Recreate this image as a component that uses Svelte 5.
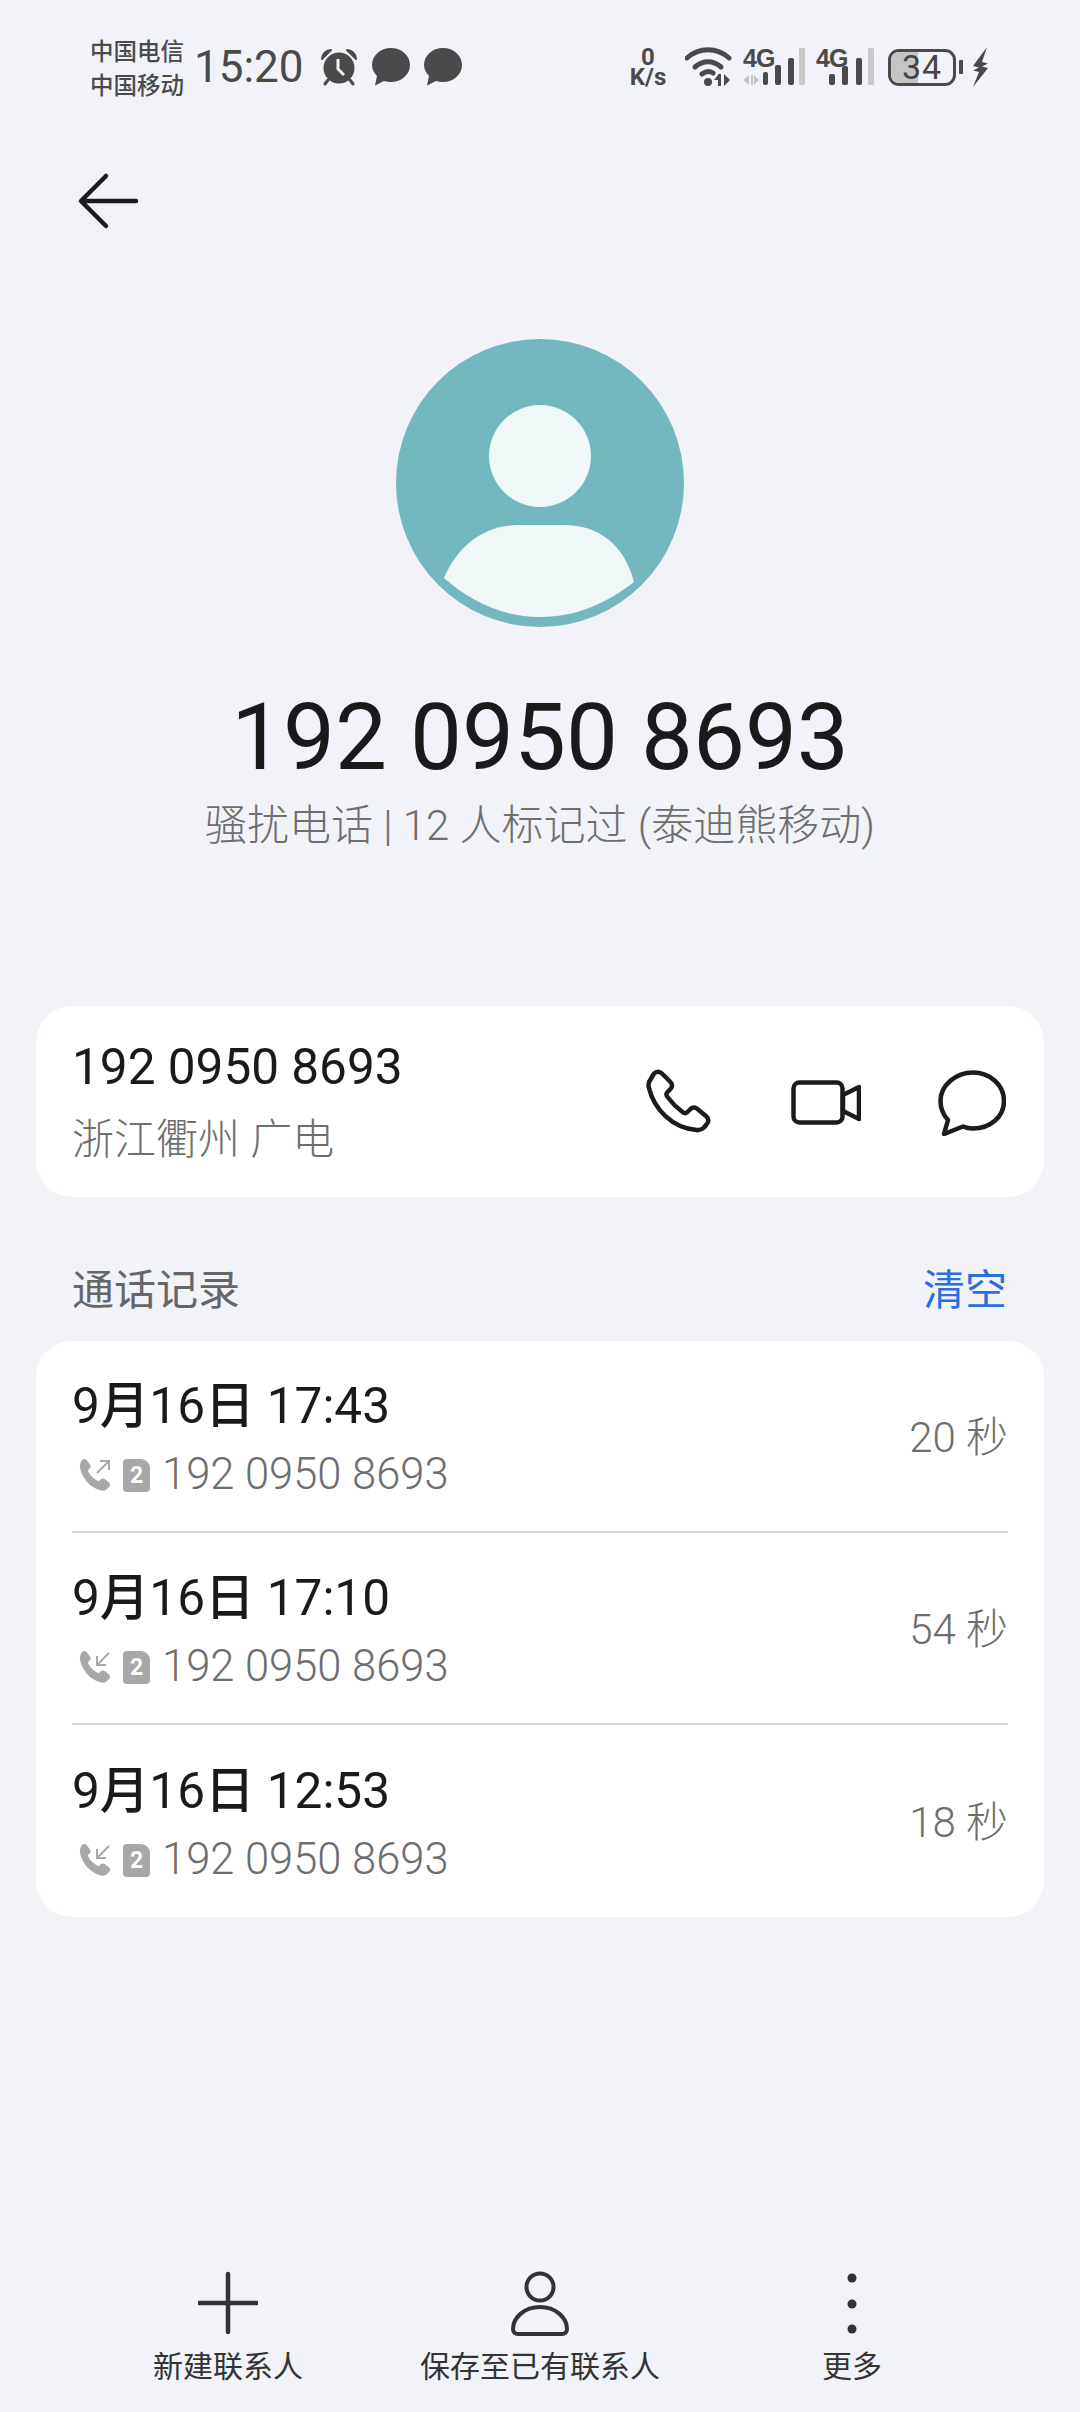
<script lang="ts">
  const calls = [
    { time: '9月16日 17:43', dur: '20 秒', out: true },
    { time: '9月16日 17:10', dur: '54 秒', out: false },
    { time: '9月16日 12:53', dur: '18 秒', out: false }
  ]
  const number = '192 0950 8693'
</script>

<div class="page">
  <div class="status">
    <div class="carrier"><span>中国电信</span><span>中国移动</span></div>
    <span class="clock">15:20</span>
    <svg class="alarm" width="38" height="38" viewBox="0 0 38 38">
      <circle cx="19" cy="20" r="15.5" fill="#4a4a4a" />
      <path d="M2 11C2 6 6 2 11 2L2 11zM36 11C36 6 32 2 27 2L36 11z" fill="#4a4a4a" stroke="#4a4a4a" stroke-width="2" stroke-linejoin="round" />
      <path d="M8 32l-3 4M30 32l3 4" stroke="#4a4a4a" stroke-width="3" stroke-linecap="round" />
      <path d="M18 11v10l6 6" stroke="#f1f3f8" stroke-width="3" fill="none" />
    </svg>
    <svg class="bubble" width="38" height="38" viewBox="0 0 38 38">
      <path d="M19 0c10.500 0 19 7.500 19 17s-8.500 17-19 17c-2.500 0-4.800-.4-7-1.100L3 37.500l2-9.500C2 24.900 0 21.200 0 17 0 7.500 8.500 0 19 0z" fill="#4a4a4a" />
    </svg>
    <svg class="bubble" width="38" height="38" viewBox="0 0 38 38">
      <path d="M19 0c10.500 0 19 7.500 19 17s-8.500 17-19 17c-2.500 0-4.800-.4-7-1.100L3 37.500l2-9.500C2 24.900 0 21.200 0 17 0 7.500 8.500 0 19 0z" fill="#4a4a4a" />
    </svg>

    <div class="status-right">
      <div class="speed"><span>0</span><span>K/s</span></div>
      <svg class="wifi" width="48" height="40" viewBox="0 0 48 40">
        <g fill="none" stroke="#4a4a4a" stroke-width="5" stroke-linecap="round">
          <path d="M2 11C14 0 32 0 44 11" />
          <path d="M10 20c8-7 18-7 26 0" />
          <path d="M17 27c4-3 8-3 11-1" />
        </g>
        <circle cx="23" cy="35" r="4" fill="#4a4a4a" />
        <path d="M33 27h3v12h-3zM33 33l-4 0 4-5zM39 27l6 6-6 6z" fill="#4a4a4a" />
      </svg>
      <div class="signal one">
        <span class="tag">4G</span>
        <svg width="62" height="39" viewBox="0 0 62 39">
          <path d="M0 32l6-5v10zM8 27h2v10H8zM11 27l5 5-5 5z" fill="#c4c4c4" />
          <rect x="20" y="24" width="5" height="13" rx="2" fill="#4a4a4a" />
          <rect x="32" y="17" width="6" height="20" rx="2" fill="#4a4a4a" />
          <rect x="45" y="10" width="6" height="27" rx="2" fill="#4a4a4a" />
          <rect x="56" y="0" width="6" height="37" rx="1" fill="#c8c8c8" />
        </svg>
      </div>
      <div class="signal two">
        <span class="tag">4G</span>
        <svg width="45" height="39" viewBox="0 0 45 39">
          <rect x="0" y="26" width="6" height="11" rx="2" fill="#4a4a4a" />
          <rect x="13" y="18" width="6" height="19" rx="2" fill="#4a4a4a" />
          <rect x="27" y="10" width="6" height="27" rx="2" fill="#4a4a4a" />
          <rect x="39" y="0" width="6" height="37" rx="1" fill="#c8c8c8" />
        </svg>
      </div>
      <div class="battery">
        <div class="fill"></div>
        <span>34</span>
      </div>
      <div class="nub"></div>
      <svg class="bolt" width="18" height="40" viewBox="0 0 18 40">
        <path d="M16 0L2 19l6 1.500-6 3 6 1.500L2 40 17 21l-6-1.500 6-3-6-1.500z" fill="#4a4a4a" />
      </svg>
    </div>
  </div>

  <div class="nav">
    <svg width="64" height="60" viewBox="0 0 64 60">
      <path d="M60 30H6M30 5L5 30l25 25" fill="none" stroke="#1c1c1c" stroke-width="4.500" stroke-linecap="round" stroke-linejoin="round" />
    </svg>
  </div>

  <div class="hero">
    <svg class="avatar" width="288" height="288" viewBox="0 0 288 288">
      <circle cx="144" cy="144" r="144" fill="#73b8bf" />
      <circle cx="144" cy="117" r="51" fill="#f0f8f8" />
      <path d="M48 239C62 205 90 186 122 186h46c34 0 60 19 70 57-26 20-56 35-94 35-38 0-70-16-96-39z" fill="#f0f8f8" />
    </svg>
    <h1>{number}</h1>
    <p class="tagline">骚扰电话 | 12 人标记过 (泰迪熊移动)</p>
  </div>

  <section class="card contact">
    <div class="contact-text">
      <div class="num">{number}</div>
      <div class="loc">浙江衢州 广电</div>
    </div>
    <div class="actions">
      <svg class="a-phone" width="68" height="68" viewBox="0 0 68 68">
        <path d="M8 4.500c2.500-2.500 5.500-2.500 8 0l8 8c2.500 2.500 2.500 5.500 .5 7.500l-3 3c-1.500 1.500-1.500 3 0 5 4.500 6 9 10.500 15 15 2 1.500 3.500 1.500 5 0l3-3c2-2 5-2 7.500 .5l8 6.500c3 2.500 3 6 .5 8.500l-2.500 3c-2 2-4.500 3-7.500 2.500C26 59 8 40 3 19c-1-3-.5-6 1.500-8.500z" fill="none" stroke="#1c1c1c" stroke-width="4.500" stroke-linejoin="round" />
      </svg>
      <svg class="a-video" width="70" height="46" viewBox="0 0 70 46">
        <rect x="2.500" y="2.500" width="49" height="40" rx="6" fill="none" stroke="#1c1c1c" stroke-width="4.500" />
        <path d="M52 15l16-8v32l-16-8z" fill="none" stroke="#1c1c1c" stroke-width="4.500" stroke-linejoin="round" />
      </svg>
      <svg class="a-msg" width="68" height="66" viewBox="0 0 68 66">
        <path d="M35 2.500c17 0 31 12.500 31 28.500S52 58.500 35 58.500c-4 0-7-.6-10-2L6 64l4-14C5 44.500 2.500 38 2.500 31 2.500 15 18 2.500 35 2.500z" fill="none" stroke="#1c1c1c" stroke-width="4.500" stroke-linejoin="round" />
      </svg>
    </div>
  </section>

  <div class="section-head">
    <span>通话记录</span>
    <span class="clear">清空</span>
  </div>

  <section class="card log">
    {#each calls as c (c.time)}
      <div class="row">
        <div class="row-text">
          <div class="time">{c.time}</div>
          <div class="sub">
            <svg width="34" height="34" viewBox="0 0 34 34">
              <path d="M3 2c1.500-1.500 3.500-1.500 4.500 0l3.500 4.500c1 1.500 .8 2.800-.2 3.800l-2 2c1.500 4.500 6 9 11 11l2-2c1-1 2.500-1.200 3.800-.2l4.500 3.500c1.500 1.200 1.500 3 0 4.500l-2 2C26 33 23 33 20 32 11 28.500 4.500 22 1.500 12 .5 9 .5 5.500 3 2z" fill="#a8a8a8" />
              {#if c.out}
                <path d="M18 15L30 3M21 3h9v9" fill="none" stroke="#a8a8a8" stroke-width="2" />
              {:else}
                <path d="M30 3L18 15M18 6v9h9" fill="none" stroke="#a8a8a8" stroke-width="2" />
              {/if}
            </svg>
            <div class="sim"><span>2</span></div>
            <span class="sub-num">{number}</span>
          </div>
        </div>
        <span class="dur">{c.dur}</span>
      </div>
    {/each}
  </section>

  <nav class="bottom">
    <div class="tool">
      <svg width="60" height="60" viewBox="0 0 60 60">
        <path d="M30 1v58M1 30h58" stroke="#333" stroke-width="4.500" stroke-linecap="round" />
      </svg>
      <span>新建联系人</span>
    </div>
    <div class="tool">
      <svg width="60" height="66" viewBox="0 0 60 66">
        <circle cx="30" cy="17" r="13.500" fill="none" stroke="#333" stroke-width="4" />
        <path d="M30 37c16 0 27 11 27 22 0 3-2 5-5 5H8c-3 0-5-2-5-5 0-11 11-22 27-22z" fill="none" stroke="#333" stroke-width="4" />
      </svg>
      <span>保存至已有联系人</span>
    </div>
    <div class="tool">
      <svg width="12" height="66" viewBox="0 0 12 66">
        <circle cx="6" cy="8" r="4.500" fill="#333" />
        <circle cx="6" cy="34" r="4.500" fill="#333" />
        <circle cx="6" cy="59" r="4.500" fill="#333" />
      </svg>
      <span>更多</span>
    </div>
  </nav>
</div>

<style>
  :global(body) {
    margin: 0;
    background: #f1f3f8;
  }
  .page {
    width: 1080px;
    height: 2412px;
    position: relative;
    overflow: hidden;
    background: #f1f3f8;
    font-family: Roboto, 'Noto Sans CJK SC', sans-serif;
    color: #1a1a1a;
  }
  .status {
    display: flex;
    align-items: center;
    height: 38px;
    padding: 48px 91px 0 90px;
    color: #4a4a4a;
  }
  .carrier {
    display: flex;
    flex-direction: column;
    font-size: 23.5px;
    line-height: 34px;
    font-weight: 500;
    width: 104px;
    margin-top: 4px;
  }
  .clock {
    font-size: 44px;
    font-weight: 450;
    line-height: 38px;
    width: 126px;
  }
  .bubble {
    margin-left: 14px;
  }
  .status-right {
    margin-left: auto;
    display: flex;
    align-items: center;
  }
  .speed {
    display: flex;
    flex-direction: column;
    align-items: center;
    font-size: 24px;
    line-height: 20px;
    font-weight: 700;
    width: 40px;
  }
  .wifi {
    margin-left: 17px;
  }
  .signal {
    position: relative;
    height: 39px;
    display: flex;
    align-items: flex-end;
  }
  .signal.one {
    margin-left: 10px;
    width: 62px;
  }
  .signal.two {
    margin-left: 11px;
    width: 58px;
    justify-content: flex-end;
  }
  .tag {
    position: absolute;
    left: 0;
    top: -2px;
    font-size: 25px;
    line-height: 24px;
    font-weight: 700;
    letter-spacing: -1px;
    font-family: 'Liberation Sans', sans-serif;
  }
  .battery {
    margin-left: 14px;
    position: relative;
    width: 68px;
    height: 37px;
    box-sizing: border-box;
    border: 3.500px solid #4a4a4a;
    border-radius: 11px;
    overflow: hidden;
    display: flex;
    align-items: center;
    justify-content: center;
  }
  .fill {
    position: absolute;
    left: 0;
    top: 0;
    bottom: 0;
    width: 27px;
    background: #c5c5c5;
  }
  .battery span {
    position: relative;
    font-size: 34px;
    line-height: 30px;
    color: #444;
    letter-spacing: 1px;
  }
  .nub {
    width: 4px;
    height: 14px;
    margin-left: 3px;
    background: #4a4a4a;
    border-radius: 1px;
  }
  .bolt {
    margin-left: 8px;
  }
  .nav {
    margin-top: 85px;
    padding-left: 76px;
    height: 60px;
    line-height: 0;
  }
  .hero {
    margin-top: 108px;
    display: flex;
    flex-direction: column;
    align-items: center;
  }
  .avatar {
    display: block;
  }
  h1 {
    margin: 61px 0 0;
    font-size: 92.5px;
    line-height: 100px;
    font-weight: 450;
    color: #1a1a1a;
  }
  .tagline {
    margin: 10px 0 0;
    font-size: 42px;
    line-height: 56px;
    color: #6e6e6e;
    font-weight: 300;
  }
  .card {
    margin: 0 36px;
    background: #fff;
    border-radius: 36px;
  }
  .contact {
    margin-top: 152px;
    height: 191px;
    display: flex;
    align-items: center;
    justify-content: space-between;
    padding: 3px 38px 0 36px;
    box-sizing: border-box;
  }
  .num {
    font-size: 49.5px;
    line-height: 56px;
    font-weight: 450;
  }
  .loc {
    margin-top: 17px;
    font-size: 42px;
    line-height: 56px;
    color: #6e6e6e;
    font-weight: 300;
  }
  .actions {
    display: flex;
    align-items: center;
    gap: 77px;
  }
  .section-head {
    margin: 61px 73px 0 72px;
    height: 56px;
    display: flex;
    align-items: center;
    justify-content: space-between;
    font-size: 42px;
    color: #666;
  }
  .clear {
    color: #2a6fdb;
  }
  .log {
    margin-top: 27px;
  }
  .row {
    margin: 0 36px 0 36px;
    height: 192px;
    box-sizing: border-box;
    display: flex;
    align-items: center;
    justify-content: space-between;
    padding-top: 8px;
    border-bottom: 2px solid #d8d8d8;
  }
  .row:last-child {
    border-bottom: 0;
  }
  .time {
    font-size: 49.5px;
    line-height: 58px;
    font-weight: 450;
  }
  .sub {
    margin-top: 12px;
    display: flex;
    align-items: center;
    height: 56px;
  }
  .sub svg {
    margin-left: 7px;
  }
  .sim {
    margin-left: 10px;
    width: 27px;
    height: 33px;
    background: #a8a8a8;
    border-radius: 4px 9px 4px 4px;
    display: flex;
    align-items: center;
    justify-content: center;
    color: #fff;
    font-size: 23px;
    font-weight: 700;
  }
  .sub-num {
    margin-left: 12px;
    font-size: 43.5px;
    line-height: 56px;
    color: #6e6e6e;
    font-weight: 300;
  }
  .dur {
    font-size: 42px;
    color: #6e6e6e;
    font-weight: 300;
    margin-bottom: 14px;
  }
  .bottom {
    position: absolute;
    left: 72px;
    right: 72px;
    top: 2270px;
    display: grid;
    grid-template-columns: repeat(3, 1fr);
  }
  .tool {
    display: flex;
    flex-direction: column;
    align-items: center;
    font-size: 30px;
    color: #333;
  }
  .tool svg {
    height: 66px;
    display: block;
  }
  .tool span {
    margin-top: 11px;
    line-height: 40px;
  }
</style>
